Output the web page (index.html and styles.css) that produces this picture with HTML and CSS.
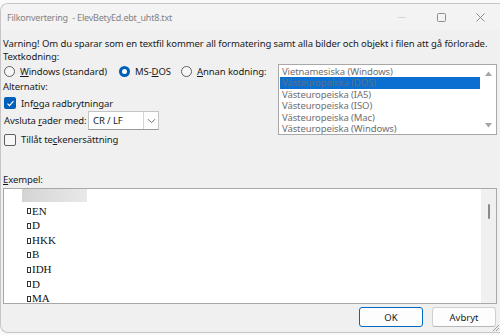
FILE: index.html
```html
<!DOCTYPE html>
<html lang="sv">
<head>
  <meta charset="UTF-8">
  <title>Filkonvertering</title>
  <link rel="stylesheet" href="styles.css">
</head>
<body>
  <div class="window">
    <div class="titlebar">
      <span class="title">Filkonvertering&nbsp; - ElevBetyEd.ebt_uht8.txt</span>
      <div class="controls">
        <span class="ctl min"><svg width="9" height="9" viewBox="0 0 9 9"><path d="M0 4.5h8" stroke="#d6d6d6" stroke-width="1"/></svg></span>
        <span class="ctl max"><svg width="9" height="9" viewBox="0 0 9 9"><rect x="0.5" y="0.5" width="8" height="8" rx="1" fill="none" stroke="#8c8c8c"/></svg></span>
        <span class="ctl close"><svg width="9" height="9" viewBox="0 0 9 9"><path d="M0.5 0.5l8 8M8.5 0.5l-8 8" stroke="#8c8c8c" stroke-width="1"/></svg></span>
      </div>
    </div>

    <div class="content">
      <p class="line">Varning! Om du sparar som en textfil kommer all formatering samt alla bilder och objekt i filen att gå förlorade.</p>
      <p class="line">Textkodning:</p>

      <div class="encoding">
        <div class="options">
          <div class="radios">
            <label class="radio r-win"><span class="dot"></span><span><u>W</u>indows (standard)</span></label>
            <label class="radio r-dos"><span class="dot on"></span><span>MS-<u>D</u>OS</span></label>
            <label class="radio"><span class="dot"></span><span><u>A</u>nnan kodning:</span></label>
          </div>
          <p class="line alt">Alternativ:</p>
          <label class="check first"><span class="box on"><svg width="9" height="9" viewBox="0 0 9 9"><path d="M1.5 4.6l2 2 4-4.4" fill="none" stroke="#fff" stroke-width="1.2"/></svg></span><span>Inf<u>o</u>ga radbrytningar</span></label>
          <div class="eol">
            <span class="eol-label">Avsluta <u>r</u>ader med:</span>
            <div class="select">
              <span class="value">CR / LF</span>
              <span class="drop"><svg width="9" height="6" viewBox="0 0 9 6"><path d="M1 1.2l3.5 3.5 3.5-3.5" fill="none" stroke="#6d6d6d" stroke-width="1"/></svg></span>
            </div>
          </div>
          <label class="check last"><span class="box"></span><span>Tillåt te<u>c</u>kenersättning</span></label>
        </div>

        <div class="listbox">
          <ul class="items">
            <li>Vietnamesiska (Windows)</li>
            <li class="selected">Västeuropeiska (DOS)</li>
            <li>Västeuropeiska (IA5)</li>
            <li>Västeuropeiska (ISO)</li>
            <li>Västeuropeiska (Mac)</li>
            <li>Västeuropeiska (Windows)</li>
          </ul>
          <div class="lb-scroll">
            <svg width="7" height="5" viewBox="0 0 7 5"><path d="M0 5L3.5 0.5 7 5z" fill="#a6a6a6"/></svg>
            <svg width="7" height="5" viewBox="0 0 7 5"><path d="M0 0L3.5 4.5 7 0z" fill="#a6a6a6"/></svg>
          </div>
        </div>
      </div>

      <p class="line sample-label"><u>E</u>xempel:</p>
      <div class="preview">
        <div class="sample">
          <div class="row blank"><span class="shade"></span></div>
          <div class="row"><span class="ctrl"></span>EN</div>
          <div class="row"><span class="ctrl"></span>D</div>
          <div class="row"><span class="ctrl"></span>HKK</div>
          <div class="row"><span class="ctrl"></span>B</div>
          <div class="row"><span class="ctrl"></span>IDH</div>
          <div class="row"><span class="ctrl"></span>D</div>
          <div class="row"><span class="ctrl"></span>MA</div>
        </div>
        <div class="vscroll"><span class="thumb"></span></div>
      </div>

      <div class="buttons">
        <button class="btn default">OK</button>
        <button class="btn">Avbryt</button>
      </div>
    </div>
    <svg class="grip" width="6" height="6" viewBox="0 0 6 6"><path d="M6 0L0 6M6 3L3 6" stroke="#9a9a9a" stroke-width="1"/></svg>
  </div>
</body>
</html>
```

FILE: styles.css
```css
* {
  box-sizing: border-box;
}
body {
  margin: 0;
  background: #f9f9f9;
  font-family: "Noto Sans", "Open Sans", sans-serif;
  font-size: 9.5px;
  letter-spacing: -0.1px;
  color: #1a1a1a;
}
p {
  margin: 0;
}
u {
  text-underline-offset: 1px;
}
.window {
  position: relative;
  margin-top: 3px;
  width: 500px;
  height: 330px;
  background: #f0f0f0;
  border: 1px solid #c6c6c6;
  border-right: none;
  border-radius: 8px 0 0 8px;
  display: flex;
  flex-direction: column;
  overflow: hidden;
}
.titlebar {
  height: 26px;
  display: flex;
  align-items: center;
  padding-left: 6px;
  background: #f3f3f3;
}
.title {
  flex: 1;
  color: #838383;
  font-size: 9px;
  letter-spacing: -0.2px;
}
.controls {
  display: flex;
  align-items: center;
}
.ctl {
  display: flex;
  justify-content: center;
  width: 39px;
}
.content {
  flex: 1;
  display: flex;
  flex-direction: column;
  padding: 7px 3px 0 2px;
}
.line {
  height: 13px;
  line-height: 13px;
  white-space: nowrap;
}
.encoding {
  display: grid;
  grid-template-columns: 1fr 219px;
  align-items: start;
}
.options {
  padding-top: 1px;
}
.radios {
  display: flex;
  height: 14px;
  align-items: center;
}
.radio, .check {
  display: flex;
  align-items: center;
  gap: 5px;
  padding-left: 1px;
}
.r-win {
  width: 115px;
}
.r-dos {
  width: 62px;
}
.dot {
  width: 11px;
  height: 11px;
  border-radius: 50%;
  border: 1px solid #5f5f5f;
  background: #f7f7f7;
  display: flex;
  align-items: center;
  justify-content: center;
}
.dot.on {
  border: none;
  background: #005fb8;
}
.dot.on::after {
  content: "";
  width: 5px;
  height: 5px;
  border-radius: 50%;
  background: #fff;
  box-shadow: 0 0 0 0.5px #005fb8;
}
.alt {
  margin-top: 2px;
}
.check {
  height: 14px;
}
.check.first {
  margin-top: 3px;
}
.check.last {
  margin-top: 3px;
  height: 13px;
}
.box {
  width: 12px;
  height: 12px;
  border-radius: 2px;
  border: 1px solid #5f5f5f;
  background: #f7f7f7;
  display: flex;
  align-items: center;
  justify-content: center;
}
.box.on {
  border: none;
  background: #005fb8;
}
.eol {
  margin-top: 1px;
  display: flex;
  align-items: center;
  padding-left: 1px;
}
.eol-label {
  width: 84px;
  white-space: nowrap;
}
.select {
  width: 71px;
  height: 19px;
  display: flex;
  background: #fff;
  border: 1px solid #c4c4c4;
  border-bottom-color: #9a9a9a;
}
.select .value {
  flex: 1;
  padding-left: 4px;
  line-height: 17px;
}
.select .drop {
  width: 15px;
  border-left: 1px solid #d4d4d4;
  display: flex;
  align-items: center;
  justify-content: center;
}
.listbox {
  margin-top: 1px;
  height: 71px;
  display: flex;
  background: #fff;
  border: 1px solid #a8a8a8;
  overflow: hidden;
}
.items {
  flex: 1;
  list-style: none;
  margin: 0;
  padding: 0.5px 0 0 1px;
  color: #6f6f6f;
}
.items li {
  height: 11.5px;
  line-height: 11.5px;
  padding-left: 2px;
  white-space: nowrap;
}
.items li.selected {
  background: #0a6fd0;
  color: #5d6f85;
}
.lb-scroll {
  width: 16px;
  display: flex;
  flex-direction: column;
  align-items: center;
  justify-content: space-between;
  padding: 6px 0 6px 1px;
}
.sample-label {
  margin-top: 27px;
}
.preview {
  margin-top: 2px;
  height: 116px;
  display: flex;
  background: #fff;
  border: 1px solid #a8a8a8;
  overflow: hidden;
}
.sample {
  flex: 1;
  font-family: "Liberation Serif", serif;
  font-size: 11px;
  letter-spacing: 0;
  color: #111;
  padding-left: 23px;
}
.row {
  height: 14.6px;
  line-height: 14.6px;
  display: flex;
  align-items: center;
}
.row.blank {
  align-items: flex-start;
  margin-left: -5px;
}
.shade {
  width: 65px;
  height: 13px;
  background: linear-gradient(90deg, #d4d4d4, #e9e9e9);
}
.ctrl {
  width: 4px;
  height: 6px;
  border: 1px solid #333;
  margin-right: 1px;
  margin-top: 1px;
}
.vscroll {
  width: 15px;
  background: #f0f0f0;
  display: flex;
  justify-content: center;
  padding-top: 15px;
}
.thumb {
  width: 2px;
  height: 15px;
  border-radius: 1px;
  background: #8a8a8a;
}
.buttons {
  margin-top: 3px;
  display: flex;
  justify-content: flex-end;
  gap: 9px;
  padding-right: 1px;
}
.btn {
  width: 64px;
  height: 20px;
  font: inherit;
  color: #1a1a1a;
  background: #fdfdfd;
  border: 1px solid #d0d0d0;
  border-bottom-color: #b8b8b8;
  border-radius: 3px;
  padding: 0;
}
.btn.default {
  border: 1px solid #0067c0;
}
.grip {
  position: absolute;
  right: 1px;
  bottom: 1px;
}
```
